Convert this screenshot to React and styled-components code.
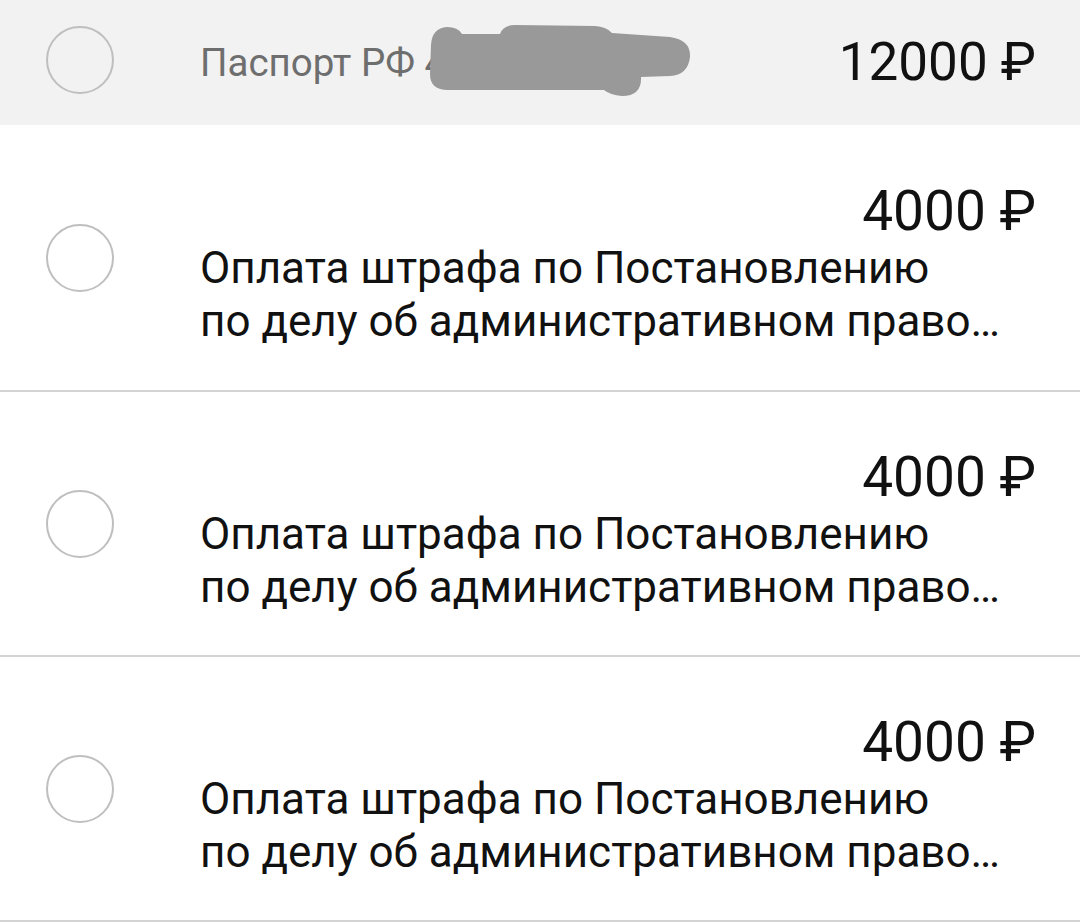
import React from "react";
import styled, { createGlobalStyle } from "styled-components";

const Global = createGlobalStyle`
  html, body { margin: 0; padding: 0; background: #ffffff; }
  body { font-family: Roboto, "Noto Sans", "Liberation Sans", sans-serif; -webkit-font-smoothing: antialiased; }
`;

const List = styled.div`
  display: flex;
  flex-direction: column;
  width: 1080px;
`;

const Row = styled.div`
  display: flex;
  align-items: center;
  box-sizing: border-box;
  height: ${(p) => p.$h}px;
  padding: 0 44px 0 46px;
  background: ${(p) => (p.$header ? "#f2f2f2" : "#ffffff")};
  border-bottom: ${(p) => (p.$header ? "none" : "2px solid #d4d4d4")};
`;

const Radio = styled.div`
  flex: none;
  box-sizing: border-box;
  width: 68px;
  height: 68px;
  margin-top: ${(p) => (p.$raised ? "-5px" : "0")};
  border-radius: 50%;
  border: 2.5px solid #bfbfbf;
`;

const Body = styled.div`
  flex: 1;
  min-width: 0;
  margin-left: 86px;
  padding-top: ${(p) => (p.$inline ? 0 : 12)}px;
  display: flex;
  flex-direction: ${(p) => (p.$inline ? "row" : "column")};
  align-items: ${(p) => (p.$inline ? "center" : "stretch")};
`;

const Label = styled.div`
  position: relative;
  flex: 1;
  font-size: 38.5px;
  color: #6e6e6e;
  white-space: nowrap;
`;

const Blot = styled.svg`
  position: absolute;
  left: 225px;
  top: -20px;
  width: 270px;
  height: 80px;
`;

const Amount = styled.div`
  font-size: ${(p) => (p.$big ? 53 : 55)}px;
  color: #111111;
  text-align: right;
  white-space: nowrap;
  line-height: ${(p) => (p.$big ? "1.172" : "62px")};
`;

const Desc = styled.div`
  font-size: 44px;
  line-height: 53px;
  color: #111111;
  white-space: nowrap;
  overflow: hidden;
  text-overflow: ellipsis;
  max-width: 805px;
`;

const fines = [1, 2, 3];

export default function App() {
  return (
    <>
      <Global />
      <List>
        <Row $header $h={125}>
          <Radio $raised />
          <Body $inline>
            <Label>
              Паспорт РФ 4
              <Blot viewBox="425 20 270 80">
                <path
                  fill="#999999"
                  d="M 431 45 Q 432 28 447 27 Q 458 27 462 34 L 500 34 Q 503 25 515 25 L 595 26 Q 607 27 612 33 L 670 37 Q 691 40 690 57 Q 688 75 670 76 L 641 77 Q 642 96 622 96 Q 610 95 604 90 L 448 90 Q 430 90 430 74 Z"
                />
              </Blot>
            </Label>
            <Amount $big>12000 ₽</Amount>
          </Body>
        </Row>
        {fines.map((id) => (
          <Row key={id} $h={id === 1 ? 267 : 265}>
            <Radio />
            <Body>
              <Amount>4000 ₽</Amount>
              <Desc>Оплата штрафа по Постановлению</Desc>
              <Desc>по делу об административном правонарушении</Desc>
            </Body>
          </Row>
        ))}
      </List>
    </>
  );
}
